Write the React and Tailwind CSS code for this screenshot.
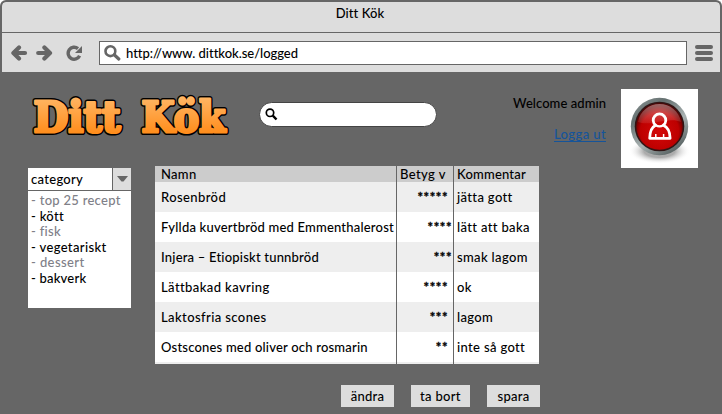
const categories = [
  { label: "- top 25 recept", cls: "text-[#808088] tracking-[0.28px]" },
  { label: "- kött", cls: "text-black tracking-[0.3px]" },
  { label: "- fisk", cls: "text-[#808088] tracking-[0.3px]" },
  { label: "- vegetariskt", cls: "text-black tracking-[0.35px]" },
  { label: "- dessert", cls: "text-[#808088] tracking-[0.4px]" },
  { label: "- bakverk", cls: "text-black tracking-[0.2px]" },
];

const rows = [
  { name: "Rosenbröd", stars: "*****", pad: "pr-[5px]", note: "jätta gott" },
  { name: "Fyllda kuvertbröd med Emmenthalerost", stars: "****", pad: "pr-[1px]", note: "lätt att baka" },
  { name: "Injera – Etiopiskt tunnbröd", stars: "***", pad: "pr-[1px]", note: "smak lagom" },
  { name: "Lättbakad kavring", stars: "****", pad: "pr-[5px]", note: "ok" },
  { name: "Laktosfria scones", stars: "***", pad: "pr-[5px]", note: "lagom" },
  { name: "Ostscones med oliver och rosmarin", stars: "**", pad: "pr-[5px]", note: "inte så gott" },
];

const words = [
  { t: "Ditt", x: 13.5, w: 87 },
  { t: "Kök", x: 121.5, w: 84 },
];

function Logo() {
  return (
    <svg width="220" height="74" viewBox="0 0 220 74" className="block">
      <defs>
        <linearGradient id="orange" gradientUnits="userSpaceOnUse" x1="0" y1="16" x2="0" y2="54">
          <stop offset="0" stopColor="#ffb766" />
          <stop offset="1" stopColor="#ff8c1a" />
        </linearGradient>
      </defs>
      <g fontFamily="'DejaVu Serif', serif" fontWeight="700" fontSize="42" strokeLinejoin="round">
        {words.map((w) => (
          <text key={w.t} x={w.x} y="52" textLength={w.w} lengthAdjust="spacingAndGlyphs" fill="#000" stroke="#000" strokeWidth="6.2">{w.t}</text>
        ))}
        {words.map((w) => (
          <text key={w.t} x={w.x} y="52" textLength={w.w} lengthAdjust="spacingAndGlyphs" fill="url(#orange)" stroke="url(#orange)" strokeWidth="3.2">{w.t}</text>
        ))}
      </g>
    </svg>
  );
}

function Avatar() {
  return (
    <svg width="77" height="79" viewBox="0 0 77 79" className="block bg-white">
      <defs>
        <linearGradient id="ring" x1="0" y1="0" x2="0.7" y2="1">
          <stop offset="0" stopColor="#929a9a" />
          <stop offset="0.3" stopColor="#647070" />
          <stop offset="0.65" stopColor="#a9b2b2" />
          <stop offset="1" stopColor="#566060" />
        </linearGradient>
        <radialGradient id="red" cx="0.5" cy="0.6" r="0.55">
          <stop offset="0" stopColor="#d40808" />
          <stop offset="0.75" stopColor="#bd0000" />
          <stop offset="1" stopColor="#5c0000" />
        </radialGradient>
        <linearGradient id="gloss" x1="0" y1="0" x2="0" y2="1">
          <stop offset="0" stopColor="#fff" stopOpacity="0.4" />
          <stop offset="1" stopColor="#fff" stopOpacity="0.08" />
        </linearGradient>
        <radialGradient id="shade">
          <stop offset="0.5" stopColor="#888" stopOpacity="0.7" />
          <stop offset="1" stopColor="#fff" stopOpacity="0" />
        </radialGradient>
      </defs>
      <ellipse cx="38.5" cy="62" rx="31" ry="13" fill="url(#shade)" />
      <circle cx="38.5" cy="37.5" r="28.7" fill="url(#ring)" />
      <circle cx="38.5" cy="37.5" r="24.8" fill="#301414" />
      <circle cx="38.5" cy="37.5" r="23.2" fill="url(#red)" />
      <path d="M17 33C19 22 28 15 38.5 15S58 22 60 33C48 27 29 38 17 33Z" fill="url(#gloss)" />
      <g fill="none" stroke="#fff" strokeWidth="2.8" strokeLinejoin="round">
        <path d="M34.6 36.2A6.3 6.3 0 1 1 42.4 36.2C47 38.2 49 43 49.1 49.3H28.7C28.8 43 30.5 38.2 34.6 36.2Z" />
        <path d="M34.7 36.3Q38.5 38.4 42.3 36.3" strokeWidth="2.4" />
        <path d="M34.8 45V49M42.6 45V49" strokeWidth="1.5" />
      </g>
    </svg>
  );
}

export default function App() {
  return (
    <div className="h-[414px] w-[722px] bg-white font-['Lato','Open_Sans',sans-serif] text-[13px] font-medium leading-[16px] text-black">
      <div className="flex h-full w-full flex-col overflow-hidden rounded-t-[6px] border-x-2 border-t-2 border-[#666] bg-[#666]">
        <header className="h-[31px] rounded-t-[4px] border-b border-[#666] bg-[#ddd] pr-[2px] pt-[3px] text-center">
          <span className="tracking-[0.1px]">Ditt Kök</span>
        </header>
        <nav className="flex h-[39px] shrink-0 items-center bg-[#ddd] pl-[9px] text-[#666]">
          <svg width="17" height="16" viewBox="0 0 17 16" fill="none" stroke="currentColor" strokeWidth="4.2">
            <path d="M14 8H4" strokeLinecap="round" />
            <path d="M8 2.5L2.4 8L8 13.5" strokeLinecap="round" strokeLinejoin="round" />
          </svg>
          <svg width="17" height="16" viewBox="0 0 17 16" className="ml-2" fill="none" stroke="currentColor" strokeWidth="4.2">
            <path d="M2.2 8H13" strokeLinecap="round" />
            <path d="M8.4 2.5L14 8L8.4 13.5" strokeLinecap="round" strokeLinejoin="round" />
          </svg>
          <svg width="17" height="16" viewBox="0 0 17 16" className="ml-[13px]" fill="none" stroke="currentColor" strokeWidth="3.4">
            <path d="M13.6 10.8A6 6 0 1 1 12 3.6" />
            <path d="M16 1V8H9Z" fill="currentColor" stroke="none" />
          </svg>
          <div className="ml-[16px] flex h-6 w-[588px] items-center border border-[#666] bg-white">
            <svg width="17" height="16" viewBox="0 0 17 16" className="ml-1" fill="none" stroke="currentColor">
              <circle cx="6.4" cy="6.2" r="4.9" strokeWidth="2.6" />
              <path d="M10.2 9.8L14.8 14" strokeWidth="3.2" strokeLinecap="round" />
            </svg>
            <span className="ml-[5px] whitespace-nowrap tracking-[-0.03px] text-black">http://www. dittkok.se/logged</span>
          </div>
          <div className="ml-2 flex flex-col gap-[2px]">
            <i className="h-1 w-[18px] rounded-full bg-[#666]" />
            <i className="h-1 w-[18px] rounded-full bg-[#666]" />
            <i className="h-1 w-[18px] rounded-full bg-[#666]" />
          </div>
        </nav>

        <div className="flex h-[94px] shrink-0 items-start">
          <div className="ml-[18px] mt-[8px]"><Logo /></div>
          <div className="ml-[19px] mt-[30px] flex h-[25px] w-[178px] items-center rounded-full border border-[#444] bg-white pl-[5px]">
            <svg width="13" height="13" viewBox="0 0 13 13" fill="none" stroke="#000">
              <circle cx="5" cy="4.8" r="3.7" strokeWidth="1.7" />
              <path d="M7.8 7.6L11.5 11.5" strokeWidth="2.4" />
            </svg>
          </div>
          <div className="ml-auto mt-[23px] flex flex-col items-end gap-[16px]">
            <span className="tracking-[0.06px]">Welcome admin</span>
            <a className="h-[15px] border-b border-[#15549a] leading-[15px] tracking-[0.4px] text-[#15549a]">Logga ut</a>
          </div>
          <div className="ml-[15px] mr-[22px] mt-[17px]"><Avatar /></div>
        </div>

        <div className="flex items-start">
          <aside className="ml-[26px] mt-[2px] h-[140px] w-[103px] bg-white">
            <div className="flex h-[23px] border-b border-[#666]">
              <span className="w-[84px] pl-[3px] pt-[3px] tracking-[0.3px]">category</span>
              <span className="flex w-[19px] items-center justify-center border-l border-[#666] bg-[#ddd]">
                <svg width="11" height="6" viewBox="0 0 11 6"><path d="M0 0H11L6.5 5.5H4.5Z" fill="#666" /></svg>
              </span>
            </div>
            <ul className="pl-[3px] pt-[2px] leading-[15.6px]">
              {categories.map((c) => <li key={c.label} className={c.cls}>{c.label}</li>)}
            </ul>
          </aside>

          <section className="ml-6">
            <div className="h-[198px] w-[384px] overflow-hidden bg-[#eee]">
              <div className="grid h-4 grid-cols-[241px_57px_86px] bg-[#ccc] tracking-[0.3px]">
                <span className="pl-[6px]">Namn</span>
                <span className="border-l border-[#666] pl-[3px] tracking-[0.4px]">Betyg v</span>
                <span className="border-l border-[#666] pl-[3px] tracking-[0.2px]">Kommentar</span>
              </div>
              {rows.map((r) => (
                <div key={r.name} className="grid h-[30px] grid-cols-[241px_57px_86px] whitespace-nowrap leading-[30px] tracking-[0.35px] odd:bg-white even:bg-[#eee]">
                  <span className={r.name.length > 20 ? "pl-[6px] tracking-[0.2px]" : "pl-[6px] tracking-[0.4px]"}>{r.name}</span>
                  <span className={"border-l border-[#666] text-right font-bold tracking-[0.6px] [-webkit-text-stroke:0.3px_#000] " + r.pad}>{r.stars}</span>
                  <span className="border-l border-[#666] pl-[3px]">{r.note}</span>
                </div>
              ))}
              <div className="grid h-[2px] grid-cols-[241px_57px_86px]">
                <span />
                <span className="border-l border-[#666]" />
                <span className="border-l border-[#666]" />
              </div>
            </div>
            <div className="ml-[186px] mt-[21px] flex gap-[17px] tracking-[0.3px]">
              <button className="h-[22px] w-[53px] bg-[#ddd]">ändra</button>
              <button className="h-[22px] w-[59px] bg-[#ddd]">ta bort</button>
              <button className="h-[22px] w-[53px] bg-[#ddd]">spara</button>
            </div>
          </section>
        </div>
      </div>
    </div>
  );
}
